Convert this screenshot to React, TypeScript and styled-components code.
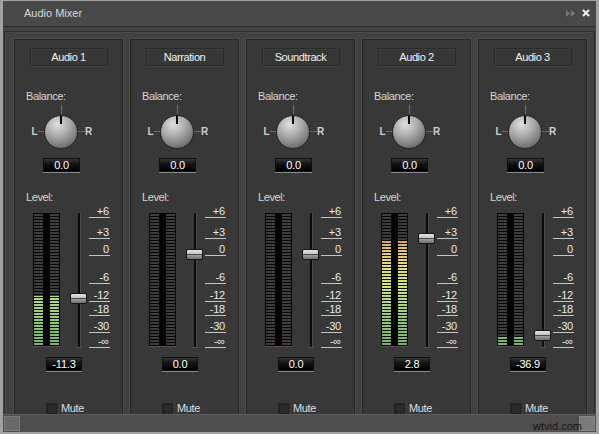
import React from "react";
import styled, { createGlobalStyle } from "styled-components";

const Global = createGlobalStyle`
  * { box-sizing: border-box; }
  html, body { margin: 0; padding: 0; background: #9d9d9d; overflow: hidden; }
  body { font-family: "Liberation Sans", Arial, sans-serif; }
`;

const Window = styled.div`
  width: 599px;
  height: 434px;
  border-style: solid;
  border-color: #a2a2a2;
  border-width: 1px 3px 2px 3px;
  background: #424242;
  display: flex;
  flex-direction: column;
`;

const TitleBar = styled.div`
  height: 26px;
  flex: none;
  background: #484848;
  border-bottom: 1px solid #2d2d2d;
  display: flex;
  align-items: center;
  padding: 0 6px 1px 21px;
  color: #dadada;
  font-size: 11px;
`;

const TitleText = styled.span`
  flex: 1;
`;

const TitleIcons = styled.div`
  display: flex;
  align-items: center;
  gap: 7px;
`;

const Content = styled.div`
  flex: 1;
  min-height: 0;
  background: #424242;
  padding: 4px 1px 0 1px;
  display: flex;
`;

const Panel = styled.div`
  flex: 1;
  border: 1px solid #2c2c2c;
  border-bottom: none;
  box-shadow: inset 1px 1px 0 #4a4a4a;
  padding: 7px 0 0 9px;
  display: flex;
  gap: 7px;
  overflow: hidden;
  background: #414141;
`;

const Strip = styled.div`
  width: 109px;
  height: 392px;
  flex: none;
  background: #383838;
  border: 1px solid #252525;
  box-shadow: 0 0 0 1px #4b4b4b;
  display: flex;
  flex-direction: column;
  padding-top: 8px;
  color: #e4e4e4;
  font-size: 11px;
  letter-spacing: -0.4px;
`;

const NameBox = styled.div`
  align-self: center;
  width: 78px;
  height: 18px;
  background: #363636;
  border: 1px solid #2a2a2a;
  box-shadow: inset 1px 1px 0 #3f3f3f, 0 1px 0 #404040;
  display: flex;
  align-items: center;
  justify-content: center;
  color: #f2f2f2;
  line-height: 14px;
`;

const Label = styled.div<{ $top: number }>`
  margin-top: ${(p) => p.$top}px;
  padding-left: 11px;
  height: 13px;
  line-height: 13px;
  color: #d6d6d6;
`;

const KnobRow = styled.div`
  margin-top: 12px;
  padding-left: 16px;
  display: flex;
  align-items: center;
  height: 33px;
`;

const Side = styled.span`
  width: 7px;
  text-align: center;
  font-weight: bold;
  font-size: 10px;
  color: #cfcfcf;
  letter-spacing: 0;
`;

const Dash = styled.span<{ $w: number }>`
  width: ${(p) => p.$w}px;
  height: 1px;
  background: #6c6c6c;
`;

const Knob = styled.div`
  position: relative;
  width: 34px;
  height: 34px;
  border-radius: 50%;
  border: 1px solid #262626;
  background: radial-gradient(circle at 38% 26%, #dedede 0%, #b0b0b0 35%, #787878 72%, #4a4a4a 100%);
  &::before {
    content: "";
    position: absolute;
    left: 16px;
    top: -11px;
    width: 1px;
    height: 9px;
    background: #6e6e6e;
  }
  &::after {
    content: "";
    position: absolute;
    left: 15px;
    top: 0;
    width: 2px;
    height: 8px;
    background: #0c0c0c;
  }
`;

const ValueBox = styled.div<{ $top: number; $left: number; $w: number }>`
  margin-top: ${(p) => p.$top}px;
  margin-left: ${(p) => p.$left}px;
  width: ${(p) => p.$w}px;
  height: 14px;
  background: linear-gradient(#363636 0%, #141414 40%, #000 100%);
  border: 1px solid #0e0e0e;
  box-shadow: 0 1px 0 #8a8a8a;
  color: #ffffff;
  font-size: 11px;
  line-height: 12px;
  text-align: center;
  letter-spacing: -0.2px;
`;

const MeterSection = styled.div`
  margin-top: 9px;
  padding-left: 18px;
  display: flex;
  height: 136px;
`;

const MeterBox = styled.div`
  width: 27px;
  height: 134px;
  background: #030303;
  padding: 0 1px;
  display: flex;
  justify-content: space-between;
  border-bottom: 1px solid #5e4c5c;
`;

const MeterColumn = styled.div`
  position: relative;
  width: 9px;
  height: 100%;
  background: #3d3d3d;
  &::after {
    content: "";
    position: absolute;
    inset: 0;
    background: repeating-linear-gradient(to bottom, #030303 0px, #030303 1px, transparent 1px, transparent 3px);
  }
`;

const MeterLit = styled.div`
  position: absolute;
  left: 0;
  right: 0;
  bottom: 0;
  background: linear-gradient(
    to bottom,
    #d8704c 0%,
    #dc9a5c 18%,
    #e6c45e 28%,
    #e8e264 40%,
    #d6e66c 55%,
    #acd878 68%,
    #8cc870 82%,
    #74b466 100%
  );
  background-size: 100% 133px;
  background-position: bottom;
`;

const FaderArea = styled.div`
  position: relative;
  width: 18px;
  margin-left: 10px;
  height: 136px;
`;

const Track = styled.div`
  position: absolute;
  left: 8px;
  top: 0;
  width: 2px;
  height: 135px;
  background: #0a0a0a;
  box-shadow: 1px 0 0 #4c4c4c;
  &::after {
    content: "";
    position: absolute;
    left: -2px;
    bottom: 0;
    width: 6px;
    height: 1px;
    background: #555;
  }
`;

const Thumb = styled.div`
  position: absolute;
  left: 0;
  width: 17px;
  height: 11px;
  border: 1px solid #161616;
  border-radius: 2px;
  background: linear-gradient(
    to bottom,
    #e6e6e6 0%,
    #c4c4c4 40%,
    #4a4a4a 45%,
    #4a4a4a 55%,
    #9a9a9a 60%,
    #6e6e6e 100%
  );
`;

const Scale = styled.div`
  position: relative;
  width: 22px;
  margin-left: 1px;
  height: 136px;
`;

const Mark = styled.div`
  position: absolute;
  left: 0;
  width: 21px;
  height: 12px;
  border-bottom: 1px solid #c4c4c4;
  text-align: right;
  padding-right: 1px;
  line-height: 11px;
  color: #e8e8e8;
  letter-spacing: -0.2px;
`;

const MuteRow = styled.div`
  margin-top: 31px;
  padding-left: 31px;
  display: flex;
  align-items: center;
  gap: 4px;
  color: #dedede;
`;

const Check = styled.span`
  width: 11px;
  height: 11px;
  background: #2a2a2a;
  border: 1px solid #232323;
  box-shadow: inset 1px 1px 0 #1e1e1e;
`;

const ScrollBar = styled.div`
  height: 18px;
  flex: none;
  background: #4e4e4e;
  border-top: 1px solid #5c5c5c;
  display: flex;
  align-items: center;
  padding: 0 1px 0 1px;
`;

const ScrollThumb = styled.div`
  width: 16px;
  height: 15px;
  background: #6a6a6a;
  border: 1px solid #7a7a7a;
`;

const Watermark = styled.span`
  margin-left: auto;
  margin-right: -3px;
  color: #151515;
  font-size: 11px;
  position: relative;
  top: 2px;
`;

const EndButton = styled.div`
  width: 16px;
  height: 15px;
  background: #7a7a7a;
  border: 1px solid #868686;
`;

type StripData = { name: string; level: number; fader: number; value: string };

const strips: StripData[] = [
  { name: "Audio 1", level: 0.373, fader: 85, value: "-11.3" },
  { name: "Narration", level: 0, fader: 41, value: "0.0" },
  { name: "Soundtrack", level: 0, fader: 41, value: "0.0" },
  { name: "Audio 2", level: 0.8, fader: 25, value: "2.8" },
  { name: "Audio 3", level: 0.075, fader: 122, value: "-36.9" },
];

const marks = [
  { label: "+6", y: 4 },
  { label: "+3", y: 25 },
  { label: "0", y: 42 },
  { label: "-6", y: 70 },
  { label: "-12", y: 88 },
  { label: "-18", y: 102 },
  { label: "-30", y: 119 },
  { label: "-\u221e", y: 134 },
];

function Meter({ level }: { level: number }) {
  const h = Math.round(level * 133);
  return (
    <MeterBox>
      {[0, 1].map((i) => (
        <MeterColumn key={i}>{h > 0 && <MeterLit style={{ height: h }} />}</MeterColumn>
      ))}
    </MeterBox>
  );
}

function ChannelStrip({ d }: { d: StripData }) {
  return (
    <Strip>
      <NameBox>{d.name}</NameBox>
      <Label $top={24}>Balance:</Label>
      <KnobRow>
        <Side>L</Side>
        <Dash $w={6} />
        <Knob />
        <Dash $w={7} />
        <Side>R</Side>
      </KnobRow>
      <ValueBox $top={10} $left={28} $w={37}>0.0</ValueBox>
      <Label $top={19}>Level:</Label>
      <MeterSection>
        <Meter level={d.level} />
        <FaderArea>
          <Track />
          <Thumb style={{ top: d.fader - 5 }} />
        </FaderArea>
        <Scale>
          {marks.map((m) => (
            <Mark key={m.label} style={{ top: m.y - 11 }}>
              {m.label}
            </Mark>
          ))}
        </Scale>
      </MeterSection>
      <ValueBox $top={8} $left={31} $w={36}>{d.value}</ValueBox>
      <MuteRow>
        <Check />
        <span>Mute</span>
      </MuteRow>
    </Strip>
  );
}

export default function App() {
  return (
    <>
      <Global />
      <Window>
        <TitleBar>
          <TitleText>Audio Mixer</TitleText>
          <TitleIcons>
            <svg width="9" height="7" viewBox="0 0 9 7">
              <path d="M0 0 L4 3.5 L0 7 Z M5 0 L9 3.5 L5 7 Z" fill="#7a7a7a" />
            </svg>
            <svg width="8" height="8" viewBox="0 0 8 8">
              <path d="M1 1 L7 7 M7 1 L1 7" stroke="#f0f0f0" strokeWidth="2" />
            </svg>
          </TitleIcons>
        </TitleBar>
        <Content>
          <Panel>
            {strips.map((s) => (
              <ChannelStrip key={s.name} d={s} />
            ))}
          </Panel>
        </Content>
        <ScrollBar>
          <ScrollThumb />
          <Watermark>wtvid.com</Watermark>
          <EndButton />
        </ScrollBar>
      </Window>
    </>
  );
}
